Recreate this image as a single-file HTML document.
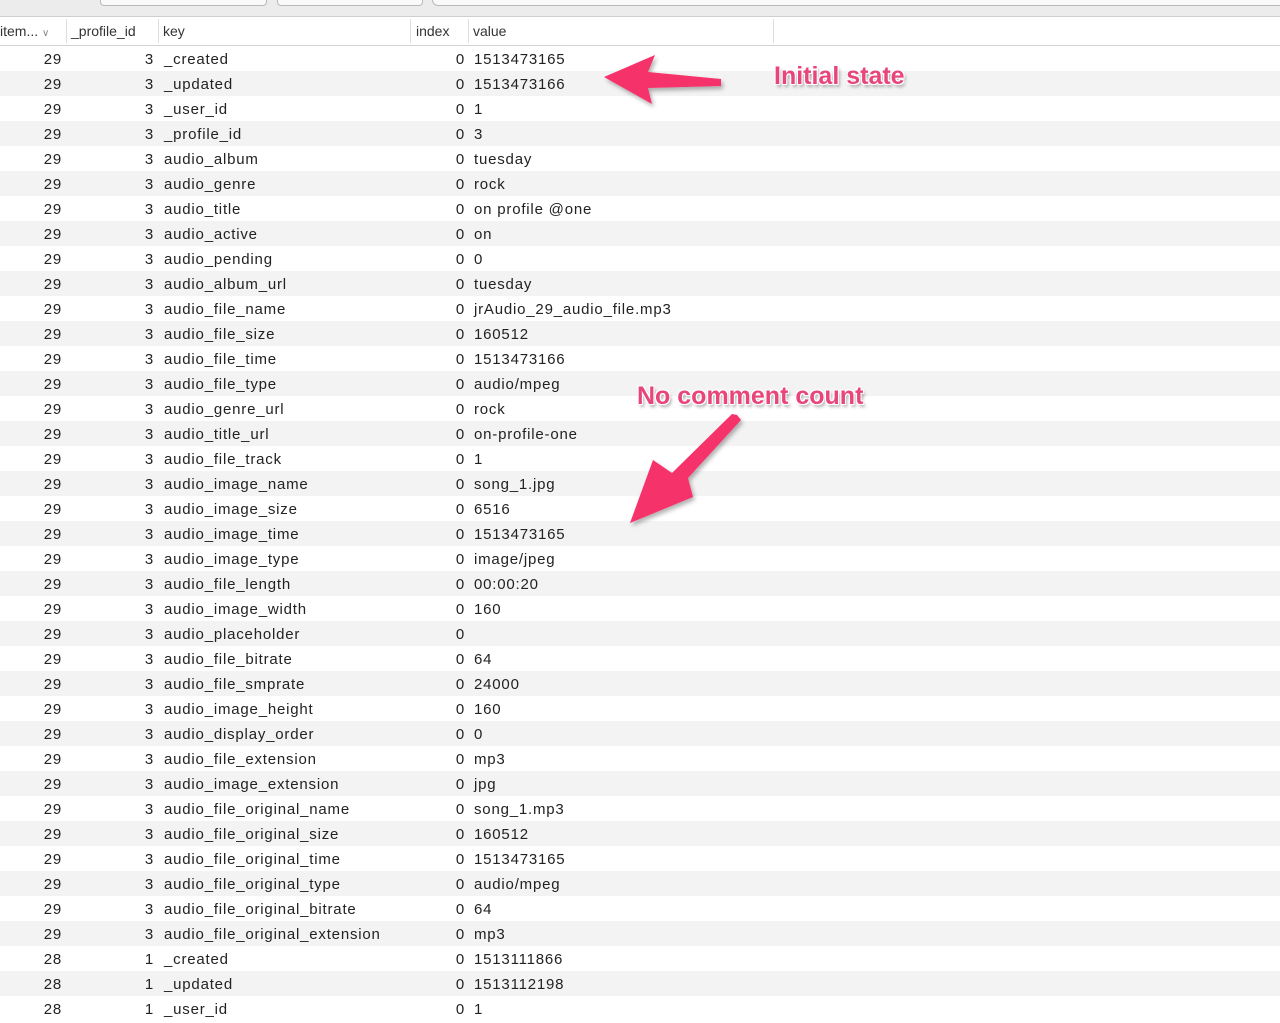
<!DOCTYPE html>
<html><head><meta charset="utf-8"><style>
body{margin:0;width:1280px;height:1021px;overflow:hidden;background:#fff;font-family:"Liberation Sans",sans-serif;font-size:15px;color:#222;position:relative}
.tb{position:absolute;left:0;top:0;width:1280px;height:16px;background:#ececec;border-bottom:1px solid #cfcfcf}
.btn{position:absolute;top:-6px;height:10px;border:1px solid #b9b9b9;border-radius:4px;background:#fafafa}
.hdr{position:absolute;left:0;top:17px;width:1280px;height:28px;background:#fff;border-bottom:1px solid #d4d4d4;font-size:14px;color:#333}
.hdr span{position:absolute;top:6px}
.sep{position:absolute;top:2px;width:1px;height:24px;background:#ddd}
.row{position:absolute;left:0;width:1280px;height:25px;line-height:27px;letter-spacing:0.8px}
.g{background:#f3f3f3}
.row span{position:absolute;top:0}
.a{right:1218px}.b{right:1126px}.c{left:164px}.d{right:815px}.e{left:474px}
.lbl{position:absolute;font-weight:bold;color:#e8457a;font-size:25px;text-shadow:0 0 2px #fff,1px 1px 0 #fff,-1px -1px 0 #fff,1px -1px 0 #fff,-1px 1px 0 #fff,2px 3px 3px rgba(0,0,0,.35)}
</style></head><body>
<div class="tb"><div class="btn" style="left:100px;width:165px"></div><div class="btn" style="left:277px;width:144px"></div><div class="btn" style="left:432px;width:870px;border-radius:6px"></div></div>
<div class="hdr">
<span style="left:0">item... <span style="position:static;font-size:10px;color:#888">&#8744;</span></span>
<div class="sep" style="left:66px"></div><span style="left:71px">_profile_id</span>
<div class="sep" style="left:158px"></div><span style="left:163px">key</span>
<div class="sep" style="left:410px"></div><span style="left:416px">index</span>
<div class="sep" style="left:468px"></div><span style="left:473px">value</span>
<div class="sep" style="left:773px"></div>
</div>
<div id="rows"></div>
<script>
var d=[["29","3","_created","1513473165"],["29","3","_updated","1513473166"],["29","3","_user_id","1"],["29","3","_profile_id","3"],["29","3","audio_album","tuesday"],["29","3","audio_genre","rock"],["29","3","audio_title","on profile @one"],["29","3","audio_active","on"],["29","3","audio_pending","0"],["29","3","audio_album_url","tuesday"],["29","3","audio_file_name","jrAudio_29_audio_file.mp3"],["29","3","audio_file_size","160512"],["29","3","audio_file_time","1513473166"],["29","3","audio_file_type","audio/mpeg"],["29","3","audio_genre_url","rock"],["29","3","audio_title_url","on-profile-one"],["29","3","audio_file_track","1"],["29","3","audio_image_name","song_1.jpg"],["29","3","audio_image_size","6516"],["29","3","audio_image_time","1513473165"],["29","3","audio_image_type","image/jpeg"],["29","3","audio_file_length","00:00:20"],["29","3","audio_image_width","160"],["29","3","audio_placeholder",""],["29","3","audio_file_bitrate","64"],["29","3","audio_file_smprate","24000"],["29","3","audio_image_height","160"],["29","3","audio_display_order","0"],["29","3","audio_file_extension","mp3"],["29","3","audio_image_extension","jpg"],["29","3","audio_file_original_name","song_1.mp3"],["29","3","audio_file_original_size","160512"],["29","3","audio_file_original_time","1513473165"],["29","3","audio_file_original_type","audio/mpeg"],["29","3","audio_file_original_bitrate","64"],["29","3","audio_file_original_extension","mp3"],["28","1","_created","1513111866"],["28","1","_updated","1513112198"],["28","1","_user_id","1"]];
var h="";d.forEach(function(r,i){h+='<div class="row'+(i%2?' g':'')+'" style="top:'+(46+i*25)+'px"><span class="a">'+r[0]+'</span><span class="b">'+r[1]+'</span><span class="c">'+r[2]+'</span><span class="d">0</span><span class="e">'+r[3]+'</span></div>';});
document.getElementById("rows").innerHTML=h;
</script>
<svg style="position:absolute;left:0;top:0" width="1280" height="1021">
<defs><filter id="sh" x="-20%" y="-20%" width="140%" height="140%"><feDropShadow dx="2" dy="3" stdDeviation="2" flood-opacity=".3"/></filter></defs>
<polygon filter="url(#sh)" fill="#f6336b" points="604,77 655,55 648,72 721,79 721,86 648,88 652,104"/>
<polygon filter="url(#sh)" fill="#f6336b" points="737,415 741,420 688,478 693,497 630,523 653,460 672,473 732,414"/>
</svg>
<div class="lbl" style="left:774px;top:62px">Initial state</div>
<div class="lbl" style="left:637px;top:382px">No comment count</div>
</body></html>
